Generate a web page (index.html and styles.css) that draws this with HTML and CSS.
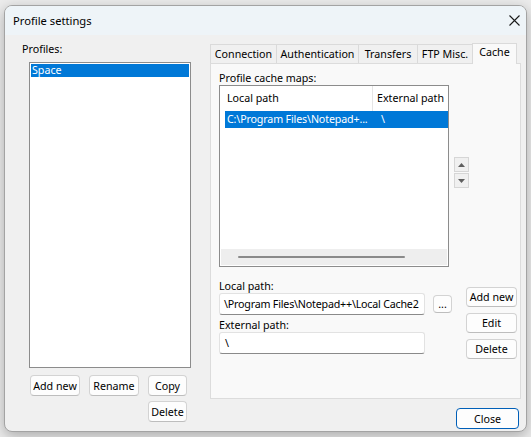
FILE: index.html
```html
<!DOCTYPE html>
<html>
<head>
<meta charset="utf-8">
<link rel="stylesheet" href="styles.css">
</head>
<body>
<div class="window">
  <div class="titlebar">
    <span class="title">Profile settings</span>
    <svg class="close-x" viewBox="0 0 11 11" width="11" height="11"><path d="M0.5 0.5 L10.5 10.5 M10.5 0.5 L0.5 10.5" stroke="#1a1a1a" stroke-width="1.1" fill="none"/></svg>
  </div>
  <div class="main">
    <div class="left">
      <div class="label">Profiles:</div>
      <div class="listbox"><div class="item selected">Space</div></div>
      <div class="btnrow">
        <button class="btn w50">Add new</button>
        <button class="btn w50">Rename</button>
        <button class="btn w39">Copy</button>
      </div>
      <div class="btnrow2"><button class="btn w39">Delete</button></div>
    </div>
    <div class="right">
      <div class="tabs">
        <div class="tab t1">Connection</div>
        <div class="tab t2">Authentication</div>
        <div class="tab t3">Transfers</div>
        <div class="tab t4">FTP Misc.</div>
        <div class="tab t5 active">Cache</div>
      </div>
      <div class="panel">
        <div class="plabel">Profile cache maps:</div>
        <div class="lvrow">
          <div class="listview">
            <div class="lv-header">
              <div class="hcell c1">Local path</div>
              <div class="hcell c2">External path</div>
            </div>
            <div class="lv-row">
              <div class="rcell r1">C:\Program Files\Notepad+...</div>
              <div class="rcell r2">\</div>
            </div>
            <div class="hscroll"><div class="thumb"></div></div>
          </div>
          <div class="updown">
            <div class="ud"><svg viewBox="0 0 7 4" width="7" height="4"><path d="M3.5 0 L7 4 L0 4 Z" fill="#5f5f5f"/></svg></div>
            <div class="ud"><svg viewBox="0 0 7 4" width="7" height="4"><path d="M0 0 L7 0 L3.5 4 Z" fill="#5f5f5f"/></svg></div>
          </div>
        </div>
        <div class="formrow">
          <div class="fleft">
            <div class="flabel">Local path:</div>
            <div class="input tight">\Program Files\Notepad++\Local Cache2</div>
            <div class="flabel second">External path:</div>
            <div class="input">\</div>
          </div>
          <button class="btn browse">...</button>
          <div class="fbtns">
            <button class="btn fb">Add new</button>
            <button class="btn fb">Edit</button>
            <button class="btn fb">Delete</button>
          </div>
        </div>
      </div>
      <button class="btn default">Close</button>
    </div>
  </div>
</div>
</body>
</html>
```
FILE: styles.css
```css
* { box-sizing: border-box; }
html, body { margin: 0; padding: 0; width: 531px; height: 437px; overflow: hidden; }
body {
  background: #ececec;
  font-family: "Noto Sans", "Open Sans", sans-serif;
  font-size: 10.7px;
  color: #000;
}
.window {
  margin: 5px 0 0 4px;
  width: 523px;
  height: 427px;
  border: 1px solid #a3a3a3;
  border-radius: 8px;
  background: #f0f0f0;
  box-shadow: 0 4px 14px rgba(0, 0, 0, 0.28);
  overflow: hidden;
  display: flex;
  flex-direction: column;
}
.titlebar {
  height: 29px;
  flex: none;
  background: #eef4f8;
  display: flex;
  align-items: center;
  justify-content: space-between;
  padding: 0 6px 0 8px;
  font-size: 11.2px;
}
.close-x { display: block; }
.main { flex: 1; display: flex; }

.left { width: 200px; flex: none; padding: 7px 0 0 17px; }
.label { height: 15px; line-height: 15px; }
.listbox {
  margin: 5px 0 0 7px;
  width: 162px;
  height: 306px;
  border: 1px solid #8c8c8c;
  background: #fff;
  padding: 1px;
}
.item { height: 13px; line-height: 13px; padding-left: 1px; }
.item.selected { background: #0078d7; color: #fff; }

.btn {
  font-family: inherit;
  font-size: inherit;
  color: #000;
  background: #fdfdfd;
  border: 1px solid #d3d3d3;
  border-bottom-color: #bdbdbd;
  border-radius: 4px;
  padding: 0;
  margin: 0;
  text-align: center;
  line-height: 18px;
}
.btnrow { display: flex; gap: 9px; margin: 7px 0 0 8px; }
.btnrow .btn { height: 21px; }
.w50 { width: 50px; }
.w39 { width: 39px; }
.btnrow2 { margin: 5px 0 0 126px; }
.btnrow2 .btn { height: 21px; }

.right {
  width: 316px;
  flex: none;
  margin-left: 5px;
  padding-top: 8px;
  display: flex;
  flex-direction: column;
}
.tabs { display: flex; align-items: flex-end; height: 20px; }
.tab {
  height: 19px;
  line-height: 18px;
  text-align: center;
  border: 1px solid #dadada;
  border-bottom: none;
  margin-right: -1px;
  background: #f0f0f0;
  white-space: nowrap;
}
.tab.active {
  height: 21px;
  margin-bottom: -1px;
  background: #f9f9f9;
  position: relative;
  z-index: 1;
  line-height: 17px;
}
.t1 { width: 67px; }
.t2 { width: 83px; }
.t3 { width: 60px; }
.t4 { width: 56px; }
.t5 { width: 45px; }

.panel {
  width: 311px;
  height: 336px;
  border: 1px solid #dcdcdc;
  background: #f9f9f9;
  padding: 8px 0 0 8px;
}
.plabel { height: 13px; line-height: 13px; }
.lvrow { display: flex; align-items: flex-start; }
.listview {
  width: 230px;
  height: 182px;
  border: 1px solid #8c8c8c;
  background: #fff;
  display: flex;
  flex-direction: column;
}
.lv-header { display: flex; height: 25px; flex: none; }
.hcell { line-height: 25px; white-space: nowrap; overflow: hidden; }
.hcell.c1 { width: 153px; padding-left: 7px; border-right: 1px solid #e5e5e5; }
.hcell.c2 { flex: 1; padding-left: 4px; }
.lv-row {
  display: flex;
  height: 17px;
  margin-left: 5px;
  background: #0078d7;
  color: #fff;
  flex: none;
}
.rcell { line-height: 17px; white-space: nowrap; }
.rcell.r1 { width: 148px; padding-left: 2px; letter-spacing: -0.15px; }
.rcell.r2 { flex: 1; padding-left: 8px; }
.hscroll {
  margin: auto 1px 1px 1px;
  height: 16px;
  background: #eeeeee;
  padding: 7px 0 0 17px;
}
.thumb { width: 167px; height: 2px; border-radius: 1px; background: #8a8a8a; }

.updown { margin: 72px 0 0 5px; display: flex; flex-direction: column; gap: 1px; }
.ud {
  width: 15px;
  height: 15px;
  border: 1px solid #d6d6d6;
  background: #f0f0f0;
  display: flex;
  align-items: center;
  justify-content: center;
}
.ud svg { display: block; }

.formrow { display: flex; align-items: flex-start; margin-top: 13px; }
.fleft { width: 206px; }
.flabel { height: 13px; line-height: 13px; }
.flabel.second { margin-top: 4px; }
.input {
  height: 22px;
  background: #fff;
  border: 1px solid #e2e2e2;
  border-bottom-color: #8a8a8a;
  border-radius: 3px;
  padding-left: 5px;
  line-height: 20px;
  white-space: nowrap;
  overflow: hidden;
}
.input.tight { padding-left: 4px; letter-spacing: -0.2px; }
.browse { width: 19px; height: 18px; margin: 15px 0 0 8px; line-height: 14px; }
.fbtns { margin: 7px 0 0 14px; display: flex; flex-direction: column; gap: 6px; }
.fb { width: 51px; height: 20px; }

.btn.default {
  align-self: flex-end;
  margin: 9px 7px 0 0;
  width: 63px;
  height: 21px;
  border: 1px solid #005fb8;
  border-radius: 4px;
}
```
